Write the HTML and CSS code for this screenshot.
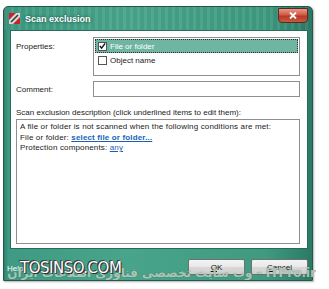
FILE: index.html
```html
<!DOCTYPE html>
<html>
<head>
<meta charset="utf-8">
<link rel="stylesheet" href="styles.css">
</head>
<body>
<div class="window">
  <div class="titlebar">
    <svg class="appicon" width="11" height="11" viewBox="0 0 11 11">
      <rect x="0" y="0" width="11" height="11" fill="#d8d8d8"/>
      <path d="M0 0h7l-7 7z" fill="#c8242a"/>
      <path d="M11 11H4l7-7z" fill="#c8242a"/>
      <path d="M2 9l7-7" stroke="#333" stroke-width="1.5"/>
    </svg>
    <span class="title">Scan exclusion</span>
    <div class="close">
      <svg width="8" height="7" viewBox="0 0 8 7"><path d="M1 0.5l6 6M7 0.5l-6 6" stroke="#fff" stroke-width="1.8"/></svg>
    </div>
  </div>
  <div class="client">
    <div class="row props">
      <div class="label">Properties:</div>
      <div class="listbox">
        <div class="item selected"><span class="check on"><svg width="8" height="8" viewBox="0 0 8 8"><path d="M1 4l2 2.5L7 1" stroke="#111" stroke-width="1.6" fill="none"/></svg></span>File or folder</div>
        <div class="item"><span class="check"></span>Object name</div>
      </div>
    </div>
    <div class="row comment">
      <div class="label">Comment:</div>
      <div class="input"></div>
    </div>
    <div class="desc-label">Scan exclusion description (click underlined items to edit them):</div>
    <div class="desc">
      <div>A file or folder is not scanned when the following conditions are met:</div>
      <div>File or folder: <a class="link bold">select file or folder...</a></div>
      <div>Protection components: <a class="link">any</a></div>
    </div>
  </div>
  <div class="footer">
    <span class="help">Help</span>
    <div class="buttons">
      <button class="btn"><u>O</u>K</button>
      <button class="btn"><u>C</u>ancel</button>
    </div>
  </div>
</div>
<div class="wm-fa"><span>وب سایت تخصصی فناوری اطلاعات ایران - ITPro.ir</span></div>
<div class="wm-en">TOSINSO.COM</div>
</body>
</html>
```
FILE: styles.css
```css
html, body {
  margin: 0;
  padding: 0;
  background: #ffffff;
  width: 329px;
  height: 289px;
  overflow: hidden;
  position: relative;
  font-family: "Liberation Sans", Arial, sans-serif;
  font-size: 8px;
  color: #1a1a1a;
}
.window {
  margin: 6px 0 0 3px;
  width: 310px;
  height: 275px;
  display: flex;
  flex-direction: column;
  background: linear-gradient(90deg, #2f7f6a 0, #3e9a82 4px, #48a48a 40%, #3f9a80 85%, #2b7a66 100%);
  border: 1px solid #23584b;
  border-radius: 5px 5px 0 0;
  box-sizing: border-box;
  box-shadow: 1px 1px 2px rgba(0,0,0,0.3);
}
.titlebar {
  height: 23px;
  display: flex;
  align-items: center;
  padding: 0 4px 0 5px;
  position: relative;
  background: repeating-linear-gradient(90deg, rgba(255,255,255,0.06) 0 3px, rgba(0,0,0,0.03) 3px 7px);
}
.appicon { margin-right: 5px; }
.title {
  color: #ffffff;
  font-weight: bold;
  font-size: 9px;
  text-shadow: 0 0 3px rgba(0,40,30,0.8);
}
.close {
  margin-left: auto;
  margin-top: -7px;
  width: 30px;
  height: 15px;
  border: 1px solid #5a2a20;
  border-radius: 0 0 4px 4px;
  background: linear-gradient(180deg, #e89a88 0, #d25a44 45%, #b83a26 55%, #c85a40 100%);
  display: flex;
  align-items: center;
  justify-content: center;
  box-sizing: border-box;
}
.client {
  margin: 0 4px 0 6px;
  background: #ffffff;
  border: 1px solid #2a6a5a;
  height: 219px;
  box-sizing: border-box;
  padding: 6px 7px 0 5px;
  display: flex;
  flex-direction: column;
}
.row {
  display: flex;
}
.label {
  width: 77px;
  flex: none;
}
.props .label { padding-top: 5px; }
.listbox {
  flex: 1;
  height: 39px;
  border: 1px solid #8f8f8f;
  box-sizing: border-box;
  padding: 1px;
}
.item {
  height: 14px;
  display: flex;
  align-items: center;
  padding-left: 3px;
}
.item.selected {
  background: #6fb5a1;
  color: #ffffff;
  outline: 1px dotted #333;
  outline-offset: -1px;
}
.check {
  width: 9px;
  height: 9px;
  border: 1px solid #555;
  background: #fff;
  margin-right: 3px;
  display: flex;
  align-items: center;
  justify-content: center;
  box-sizing: border-box;
}
.comment {
  margin-top: 5px;
  align-items: center;
}
.input {
  flex: 1;
  height: 16px;
  border: 1px solid #8f8f8f;
  box-sizing: border-box;
}
.desc-label {
  margin-top: 11px;
}
.desc {
  margin-top: 2px;
  height: 125px;
  border: 1px solid #8f8f8f;
  box-sizing: border-box;
  padding: 2px 3px;
  line-height: 10.5px;
  letter-spacing: 0.15px;
}
.link {
  color: #1a5fb4;
  text-decoration: underline;
}
.bold { font-weight: bold; }
.footer {
  flex: 1;
  display: flex;
  align-items: flex-start;
  padding: 10px 4px 0 3px;
}
.help {
  color: #ffffff;
  padding-top: 5px;
}
.buttons {
  margin-left: auto;
  display: flex;
  gap: 6px;
}
.btn {
  width: 57px;
  height: 16px;
  font-family: "Liberation Sans", Arial, sans-serif;
  font-size: 8px;
  color: #111;
  border: 1px solid #707070;
  border-radius: 2px;
  background: linear-gradient(180deg, #f4f4f4 0, #e8e8e8 50%, #d8d8d8 51%, #cfcfcf 100%);
  padding: 0;
}
.wm-fa {
  position: absolute;
  left: 8px;
  top: 266px;
  width: 308px;
  display: flex;
  justify-content: flex-end;
  overflow: hidden;
  font-family: "DejaVu Sans", sans-serif;
  font-size: 12px;
  font-weight: bold;
  color: rgba(200, 225, 212, 0.8);
  white-space: nowrap;
  text-shadow: 0 0 1px rgba(60,60,60,0.7);
}
.wm-fa span { flex: none; }
.wm-en {
  position: absolute;
  left: 20px;
  top: 259px;
  font-family: "DejaVu Sans", sans-serif;
  font-size: 15px;
  color: #ffffff;
  letter-spacing: -0.5px;
  text-shadow: 0 0 1px #222, 1px 1px 0 #333, -1px -1px 0 #444;
}
```
